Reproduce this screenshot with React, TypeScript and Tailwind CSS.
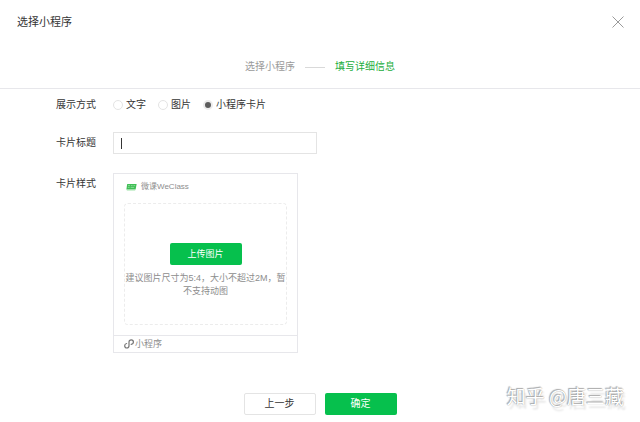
import { useState } from "react";

const displayTypes = [
    { value: "text", label: "文字" },
    { value: "image", label: "图片" },
    { value: "card", label: "小程序卡片" },
];

function CloseIcon() {
    return (
        <svg viewBox="0 0 12 12" className="h-3 w-3" fill="none" stroke="currentColor" strokeWidth="1">
            <path d="M.5.5l11 11M11.5.5l-11 11" />
        </svg>
    );
}

function ClassLogo() {
    return (
        <svg viewBox="0 0 11 8" className="h-2 w-[11px]">
            <path d="M1.2 1h9.4L9.6 6.6H.4z" fill="#3fbf55" />
            <path d="M2 2.6h2.2M5 2.6h1.6M7.4 2.6h1.8M1.8 4.4h1.8M4.6 4.4h3.6" stroke="#b5eabd" strokeWidth=".6" />
            <path d="M.8 7.3h8.4" stroke="#a9e6b2" strokeWidth=".7" />
        </svg>
    );
}

function MiniProgramIcon() {
    return (
        <svg viewBox="0 0 10 10" className="h-[10px] w-[10px] text-[#757575]" fill="none" stroke="currentColor" strokeWidth="1.2" strokeLinecap="round">
            <path d="M2.6 4.5C1.4 4.7.7 5.6.7 6.8.7 8 1.6 9 2.8 9S5 8 5 6.800V3C5 1.800 5.900.9 7.200.9S9.400 1.800 9.400 3 8.600 5.100 7.200 5.300" />
        </svg>
    );
}

export default function App() {
    const [displayType, setDisplayType] = useState("card");
    const [title, setTitle] = useState("");

    return (
        <div className="relative bg-white font-['Liberation_Sans','Noto_Sans_CJK_SC',sans-serif] text-[10px] leading-4 text-[#353535]">
            <header className="flex h-11 items-center justify-between pr-4 pl-[17px]">
                <h1 className="text-[11px]">选择小程序</h1>
                <button type="button" aria-label="关闭" className="flex h-3 w-3 text-[#9a9a9a]">
                    <CloseIcon />
                </button>
            </header>

            <ol className="flex h-[45px] items-center justify-center gap-[10px] border-b border-[#e7e7eb] pt-0.5">
                <li className="text-[#9a9a9a]">选择小程序</li>
                <li aria-hidden="true" className="w-5 border-t border-[#d9d9d9]" />
                <li className="text-[#1aad3c]">填写详细信息</li>
            </ol>

            <form id="card-form" className="px-14 pt-2" onSubmit={(e) => e.preventDefault()}>
                <div role="radiogroup" aria-labelledby="display-label" className="flex items-center">
                    <span id="display-label" className="w-[57px] shrink-0">展示方式</span>
                    <div className="flex items-center gap-3">
                        {displayTypes.map((item) => (
                            <label key={item.value} className="flex items-center gap-[3px]">
                                <input
                                    type="radio"
                                    name="display"
                                    value={item.value}
                                    checked={displayType === item.value}
                                    onChange={() => setDisplayType(item.value)}
                                    className="h-[10px] w-[10px] appearance-none rounded-full border border-[#e4e4e4] bg-white checked:border-2 checked:border-[#ececec] checked:bg-[#5c5c5c]"
                                />
                                {item.label}
                            </label>
                        ))}
                    </div>
                </div>

                <div className="mt-[19px] flex items-center">
                    <label htmlFor="card-title" className="w-[57px] shrink-0">卡片标题</label>
                    <div className="flex h-[22px] w-full max-w-[204px] items-center border border-[#e4e4e4] px-[7px]">
                        {title === "" && <span aria-hidden="true" className="h-[11px] w-px shrink-0 bg-[#353535]" />}
                        <input
                            id="card-title"
                            type="text"
                            value={title}
                            onChange={(e) => setTitle(e.target.value)}
                            className="w-full bg-transparent outline-none"
                        />
                    </div>
                </div>

                <div className="mt-[19px] flex items-start">
                    <span className="w-[57px] shrink-0 pt-[3px]">卡片样式</span>
                    <div className="w-full max-w-[185px] border border-[#e7e7eb] text-[9px] text-[#8d8d8d]">
                        <div className="px-[10px] pt-[5px] pb-[10px]">
                            <div className="flex items-center gap-1 pl-0.5">
                                <ClassLogo />
                                <span className="text-[8px]">微课WeClass</span>
                            </div>
                            <div className="mt-2 flex h-[122px] flex-col items-center justify-end gap-[7px] rounded-sm border border-dashed border-[#ececec] pb-[26px]">
                                <button type="button" className="h-[22px] w-[72px] rounded-xs bg-[#06c04d] text-white">
                                    上传图片
                                </button>
                                <p className="text-center leading-[13px]">建议图片尺寸为5:4，大小不超过2M，暂不支持动图</p>
                            </div>
                        </div>
                        <div className="flex items-center border-t border-[#e7e7eb] pl-[10px]">
                            <MiniProgramIcon />
                            <span className="pl-px">小程序</span>
                        </div>
                    </div>
                </div>
            </form>

            <footer className="flex justify-center gap-[9px] pt-10 pb-[7px]">
                <button type="button" className="h-[22px] w-[72px] rounded-xs border border-[#e4e4e4] bg-white">
                    上一步
                </button>
                <button type="submit" form="card-form" className="h-[22px] w-[72px] rounded-xs bg-[#06c04d] text-white">
                    确定
                </button>
            </footer>

            <div className="pointer-events-none absolute right-4 bottom-[10px] font-['Noto_Sans_CJK_SC',sans-serif] text-[19px] leading-8 text-white [text-shadow:0_0_1px_#8a8a8a,-1px_-1px_1px_#aaaaaa,2px_4px_2px_#e4e4e4]">
                知乎 @唐三藏
            </div>
        </div>
    );
}
